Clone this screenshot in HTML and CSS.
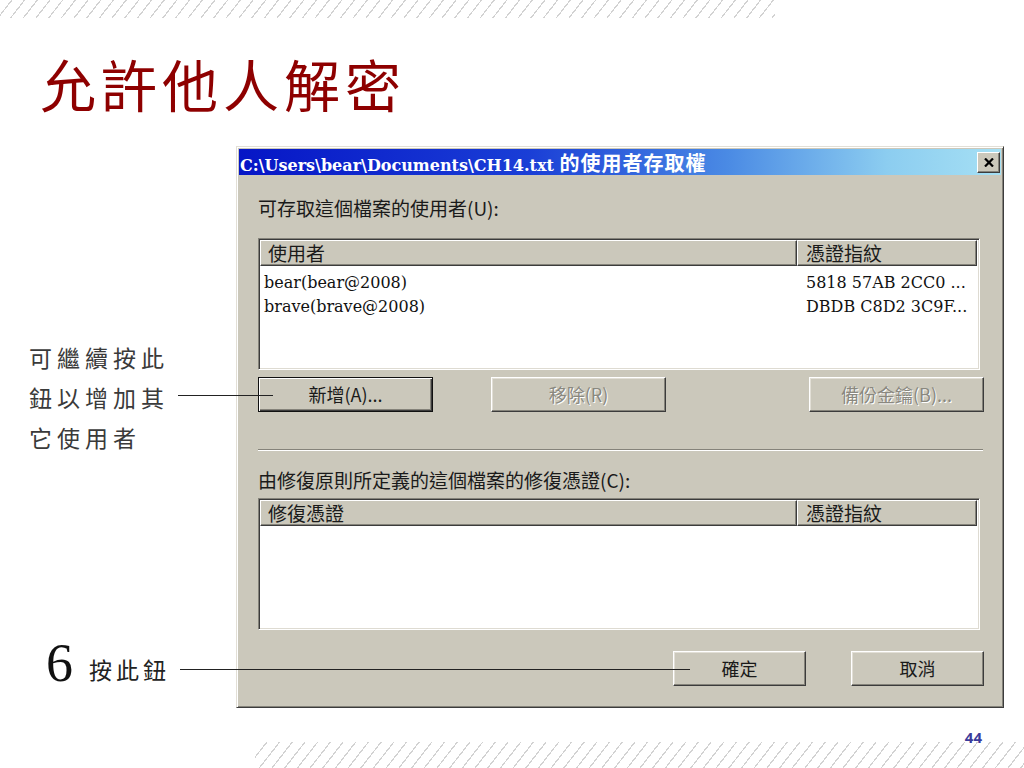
FILE: index.html
```html
<!DOCTYPE html>

<html>
<head>
    <meta charset="utf-8">
    <title>允許他人解密</title>
    <link rel="stylesheet" href="styles.css">
</head>

<body>

<div class="slide">

    <div class="hatch hatchTop"></div>

    <h1 class="title">允許他人解密</h1>

    <div class="stage">

        <div class="notes">
            <div class="note noteAdd">可繼續按此<br/>鈕以增加其<br/>它使用者<span class="leader leaderAdd"></span></div>
            <div class="note noteOk"><span class="step">6</span><span>按此鈕</span><span class="leader leaderOk"></span></div>
        </div>

        <div class="dialog">
            <div class="titlebar">
                <span class="caption">C:\Users\bear\Documents\CH14.txt <span class="capCjk">的使用者存取權</span></span>
                <span class="closeBtn">
                    <svg width="10" height="9" viewBox="0 0 10 9">
                        <path d="M1 0.5 L9 8.5 M9 0.5 L1 8.5" stroke="#000" stroke-width="2.2" fill="none"/>
                    </svg>
                </span>
            </div>

            <div class="dlgBody">
                <div class="label labelUsers">可存取這個檔案的使用者(U):</div>

                <div class="listview">
                    <div class="lvHead">
                        <span class="colName">使用者</span>
                        <span class="colPrint">憑證指紋</span>
                    </div>
                    <div class="lvRows">
                        <div class="lvRow">
                            <span class="colName">bear(bear@2008)</span>
                            <span class="colPrint">5818 57AB 2CC0 ...</span>
                        </div>
                        <div class="lvRow">
                            <span class="colName">brave(brave@2008)</span>
                            <span class="colPrint">DBDB C8D2 3C9F...</span>
                        </div>
                    </div>
                </div>

                <div class="btnRow">
                    <span class="btn wide focused">新增(A)...</span>
                    <span class="btn wide disabled">移除(R)</span>
                    <span class="btn wide disabled pushRight">備份金鑰(B)...</span>
                </div>

                <div class="separator"></div>

                <div class="label labelRecovery">由修復原則所定義的這個檔案的修復憑證(C):</div>

                <div class="listview">
                    <div class="lvHead">
                        <span class="colName">修復憑證</span>
                        <span class="colPrint">憑證指紋</span>
                    </div>
                    <div class="lvRows"></div>
                </div>

                <div class="btnRow okRow">
                    <span class="btn narrow">確定</span>
                    <span class="btn narrow">取消</span>
                </div>
            </div>
        </div>

    </div>

    <div class="footer"><span class="pageNo">44</span></div>

    <div class="hatch hatchBottom"></div>

</div>

</body>
</html>
```

FILE: styles.css
```css
body{
    margin: 0;
    background: #ffffff;
    font-family: "Noto Sans CJK TC", "Noto Sans", sans-serif;
}

.slide{
    width: 1024px;
    height: 768px;
    overflow: hidden;
}

/* diagonal bands at top and bottom */
.hatch{
    background: repeating-linear-gradient(128deg, transparent 0 8.8px, #d2d2d2 8.8px 10px);
}
.hatchTop{
    width: 775px;
    height: 18px;
}
.hatchBottom{
    margin-left: 255px;
    width: 769px;
    height: 26px;
}

.title{
    box-sizing: border-box;
    height: 128px;
    margin: 0;
    padding: 33px 0 0 40px;
    font-size: 56px;
    line-height: 64px;
    font-weight: normal;
    letter-spacing: 5px;
    color: #8e0000;
}

.stage{
    display: flex;
    height: 562px;
}

/* callouts on the left */
.notes{
    width: 236px;
    flex: none;
}
.note{
    position: relative;
    color: #3a3a3a;
    font-size: 23px;
}
.noteAdd{
    margin-top: 191px;
    padding-left: 29px;
    line-height: 40px;
    letter-spacing: 5px;
}
.noteOk{
    display: flex;
    align-items: center;
    height: 50px;
    margin-top: 187px;
    letter-spacing: 4px;
    color: #222;
}
.step{
    margin-left: 46px;
    margin-right: 16px;
    font-family: "Liberation Serif", serif;
    font-size: 54px;
    line-height: 50px;
    letter-spacing: 0;
    margin-top: -12px;
    color: #111;
}
.leader{
    position: absolute;
    z-index: 2;
    height: 1px;
    background: #222;
}
.leaderAdd{
    top: 58px;
    left: 178px;
    width: 95px;
}
.leaderOk{
    top: 25px;
    left: 180px;
    width: 510px;
}

/* the dialog window */
.dialog{
    box-sizing: border-box;
    width: 768px;
    height: 562px;
    padding: 2px;
    background: #cbc8bb;
    border: 1px solid;
    border-color: #e2dfd6 #3c3c3c #3c3c3c #e2dfd6;
    box-shadow: inset 1px 1px #ffffff, inset -1px -1px #85837a;
}

.titlebar{
    display: flex;
    align-items: center;
    height: 26px;
    padding-left: 1px;
    background: linear-gradient(to right, #0616c6 0%, #1a3ed6 38%, #4a8ae4 64%, #8ccdf0 85%, #a6e0f4 100%);
    color: #ffffff;
}
.caption{
    flex: 1;
    font-family: "DejaVu Serif", "Noto Sans CJK TC", serif;
    font-weight: bold;
    font-size: 16px;
    white-space: nowrap;
}
.capCjk{
    font-family: "Noto Sans CJK TC", sans-serif;
    font-size: 20px;
    letter-spacing: 1px;
}
.closeBtn{
    display: flex;
    align-items: center;
    justify-content: center;
    box-sizing: border-box;
    width: 23px;
    height: 21px;
    margin-right: 1px;
    background: #cbc8bb;
    border: 1px solid;
    border-color: #ffffff #3c3c3c #3c3c3c #ffffff;
    box-shadow: inset -1px -1px #85837a;
}

.dlgBody{
    padding: 0 17px 0 19px;
    color: #1a1a1a;
    font-size: 19px;
}

.label{
    height: 20px;
    line-height: 20px;
    white-space: nowrap;
}
.labelUsers{
    margin-top: 23px;
    margin-bottom: 20px;
}
.labelRecovery{
    margin-top: 19px;
    margin-bottom: 8px;
}

.listview{
    box-sizing: border-box;
    height: 132px;
    margin-right: 4px;
    background: #ffffff;
    border: 1px solid;
    border-color: #85837a #ffffff #ffffff #85837a;
    box-shadow: inset 1px 1px #3c3c3c, inset -1px -1px #dedbd2;
    padding: 1px;
}
.lvHead{
    display: flex;
    height: 26px;
}
.lvHead span{
    box-sizing: border-box;
    height: 26px;
    line-height: 24px;
    background: #cbc8bb;
    border: 1px solid;
    border-color: #ffffff #3c3c3c #3c3c3c #ffffff;
    box-shadow: inset -1px -1px #85837a;
}
.lvHead .colName{
    width: 537px;
    padding-left: 7px;
}
.lvHead .colPrint{
    width: 180px;
    padding-left: 8px;
}
.lvRows{
    padding-top: 5px;
}
.lvRow{
    display: flex;
    height: 24px;
    line-height: 24px;
    font-family: "DejaVu Serif", serif;
    font-size: 16px;
    color: #111;
}
.lvRow .colName{
    box-sizing: border-box;
    width: 537px;
    padding-left: 4px;
}
.lvRow .colPrint{
    padding-left: 9px;
    white-space: nowrap;
}

/* push buttons */
.btnRow{
    display: flex;
    gap: 58px;
    margin-top: 7px;
}
.okRow{
    justify-content: flex-end;
    gap: 45px;
    margin-top: 21px;
}
.btn{
    box-sizing: border-box;
    height: 35px;
    line-height: 33px;
    text-align: center;
    font-size: 18px;
    background: #cbc8bb;
    border: 1px solid;
    border-color: #ffffff #3c3c3c #3c3c3c #ffffff;
    box-shadow: inset -1px -1px #85837a, inset 1px 1px #e2dfd6;
    white-space: nowrap;
}
.btn.wide{
    width: 175px;
}
.btn.narrow{
    width: 133px;
}
.btn.focused{
    border-color: #111;
    box-shadow: inset 1px 1px #ffffff, inset -1px -1px #3c3c3c, inset -2px -2px #85837a;
}
.btn.disabled{
    color: #8a887f;
    text-shadow: 1px 1px #ffffff;
}
.pushRight{
    margin-left: auto;
}

.separator{
    margin: 37px 1px 0 0;
    border-top: 1px solid #85837a;
    border-bottom: 1px solid #ffffff;
}

.footer{
    box-sizing: border-box;
    height: 34px;
    padding: 16px 42px 0 0;
    text-align: right;
}
.pageNo{
    font-family: "Open Sans", sans-serif;
    font-weight: bold;
    font-size: 15px;
    line-height: 17px;
    color: #3b3b9b;
}
```
